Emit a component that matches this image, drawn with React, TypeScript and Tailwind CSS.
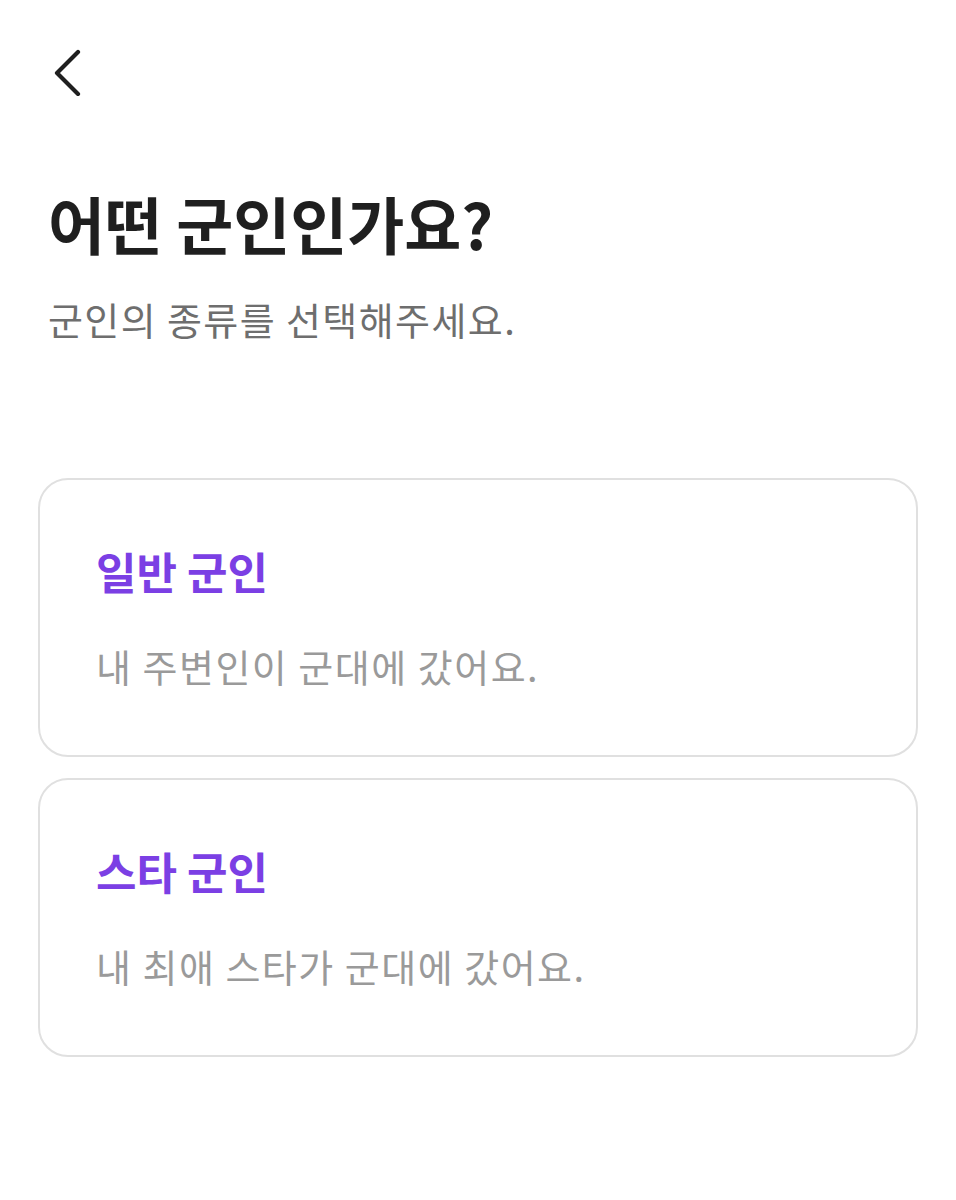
const font = { fontFamily: '"Noto Sans CJK KR", "Noto Sans", sans-serif' };

function BackIcon() {
  return (
    <svg width="44" height="48" viewBox="0 0 44 48" fill="none">
      <path d="M30 4 L9 25 L30 46" stroke="#1f1f1f" strokeWidth="4.2" strokeLinecap="round" strokeLinejoin="round" />
    </svg>
  );
}

function OptionCard({ title, desc }: { title: string; desc: string }) {
  return (
    <div className="w-full cursor-pointer rounded-[30px] border-2 border-[#e0e0e0] bg-white h-[279px] pl-[56px] pt-[65px]">
      <p className="text-[44px] leading-[52px] font-bold text-[#7b3fe4]">{title}</p>
      <p className="mt-[45px] text-[38px] leading-[48px] text-[#9a9a9a] tracking-[1.5px]">{desc}</p>
    </div>
  );
}

export default function App() {
  return (
    <div style={font} className="min-h-[1200px] w-full bg-white">
      <div className="pt-[48px] pl-[48px]">
        <BackIcon />
      </div>
      <div className="px-[48px] mt-[91px]">
        <h1 className="text-[62px] leading-[72px] font-bold text-[#1f1f1f]">어떤 군인인가요?</h1>
        <p className="mt-[36px] text-[38px] leading-[48px] text-[#6e6e6e] tracking-[1.4px]">군인의 종류를 선택해주세요.</p>
      </div>
      <div className="px-[38px] mt-[135px] flex flex-col gap-[21px]">
        <OptionCard title="일반 군인" desc="내 주변인이 군대에 갔어요." />
        <OptionCard title="스타 군인" desc="내 최애 스타가 군대에 갔어요." />
      </div>
    </div>
  );
}
